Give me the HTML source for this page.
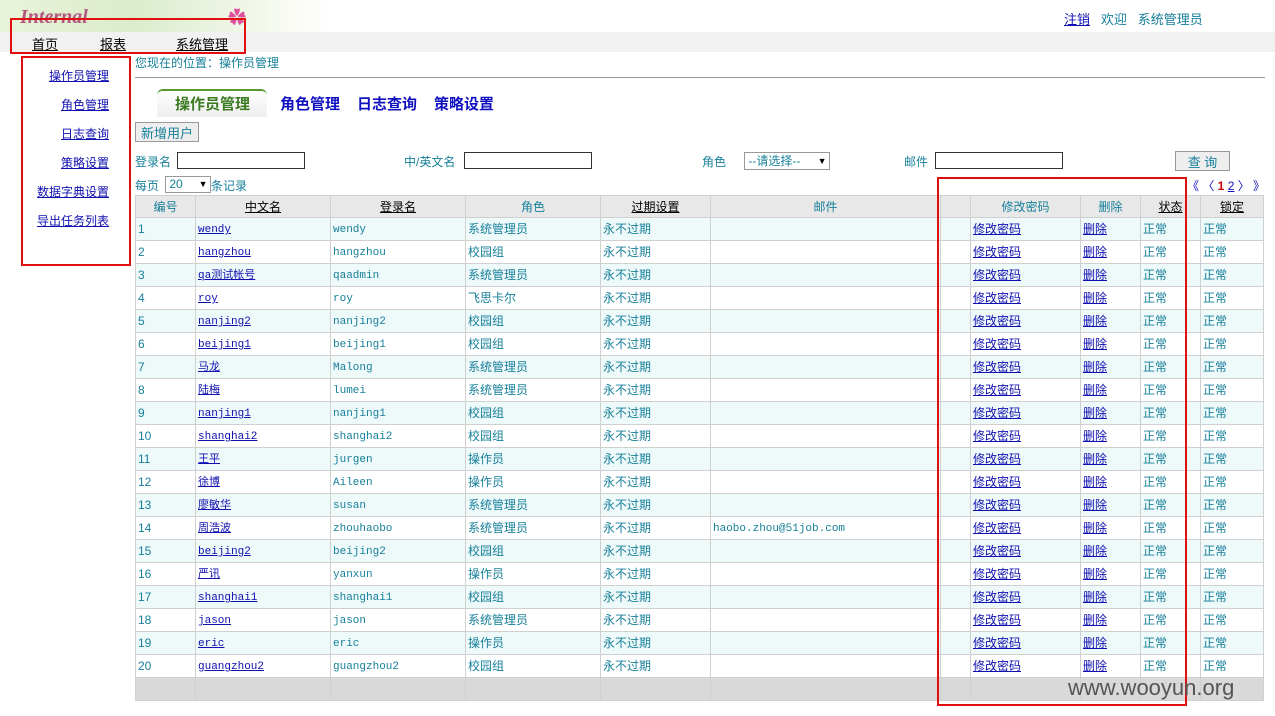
<!DOCTYPE html><html><head><meta charset="utf-8"><style>
body{margin:0;width:1275px;height:716px;background:#fff;font-family:"Liberation Sans","Noto Sans CJK SC",sans-serif;font-size:12px;color:#17809a;position:relative;overflow:hidden}
.a{position:absolute}
a{color:#1010b0;text-decoration:underline}
.nav a{color:#000}
table{border-collapse:collapse;table-layout:fixed;position:absolute;left:135px;top:195px}
td{border:1px solid #d0d0d0;height:22px;padding:0 2px;font-size:12px;white-space:nowrap;overflow:hidden;vertical-align:middle;line-height:14px}
tr.h td{background:#e8e8e8;text-align:center;height:21px}
tr.o td{background:#eef9fa}
tr.b td{background:#d9d9d9}
.m{font-family:"Liberation Mono","Noto Sans CJK SC",monospace;font-size:11px}
.m span,.m a{position:relative;top:1px}
input.t{position:absolute;height:15px;border:1px solid #333;padding:0}
.btn{position:absolute;background:#eee;border:1px solid #999;color:#17809a;font-size:13px;text-align:center}
.red{position:absolute;border:2px solid #e01010}
</style></head><body>
<div class="a" style="left:0;top:0;width:330px;height:32px;background:linear-gradient(90deg,#e9f3d8,#dbeccb 40%,#f4f8ec 80%,#fff)"></div>
<div class="a" style="left:20px;top:6px;font-family:'Liberation Serif',serif;font-style:italic;font-weight:bold;font-size:20px;color:#b05a80">Internal</div>
<div class="a" style="left:228px;top:4px;color:#e0509a;font-size:18px">✿</div>
<div class="a" style="left:0;top:32px;width:1275px;height:20px;background:#f1f1f1"></div>
<div class="a nav" style="left:32px;top:34px;font-size:13px"><a>首页</a></div>
<div class="a nav" style="left:100px;top:34px;font-size:13px"><a>报表</a></div>
<div class="a nav" style="left:176px;top:34px;font-size:13px"><a>系统管理</a></div>
<div class="a" style="left:1064px;top:9px;font-size:13px"><a>注销</a>&nbsp;&nbsp; <span>欢迎</span>&nbsp;&nbsp; <span>系统管理员</span></div>
<div class="red" style="left:10px;top:18px;width:232px;height:32px"></div>
<div class="red" style="left:21px;top:56px;width:106px;height:206px"></div>
<div class="a" style="left:49px;top:67px;font-size:12px"><a>操作员管理</a></div>
<div class="a" style="left:61px;top:96px"><a>角色管理</a></div>
<div class="a" style="left:61px;top:125px"><a>日志查询</a></div>
<div class="a" style="left:61px;top:154px"><a>策略设置</a></div>
<div class="a" style="left:37px;top:183px"><a>数据字典设置</a></div>
<div class="a" style="left:37px;top:212px"><a>导出任务列表</a></div>
<div class="a" style="left:135px;top:54px;font-size:12px">您现在的位置：操作员管理</div>
<div class="a" style="left:135px;top:77px;width:1130px;border-top:1px solid #999"></div>
<div class="a" style="left:157px;top:89px;width:110px;height:26px;background:linear-gradient(#fff,#eee);border-top:2px solid #5a9a30;border-radius:6px 6px 0 0"></div>
<div class="a" style="left:175px;top:93px;font-size:15px;font-weight:bold;color:#3a7a20">操作员管理</div>
<div class="a" style="left:280px;top:93px;font-size:15px;font-weight:bold;color:#1010c0">角色管理</div>
<div class="a" style="left:357px;top:93px;font-size:15px;font-weight:bold;color:#1010c0">日志查询</div>
<div class="a" style="left:434px;top:93px;font-size:15px;font-weight:bold;color:#1010c0">策略设置</div>
<div class="btn" style="left:135px;top:122px;width:62px;height:18px">新增用户</div>
<div class="a" style="left:135px;top:153px;font-size:12px">登录名</div><input class="t" style="left:177px;top:152px;width:126px">
<div class="a" style="left:404px;top:153px;font-size:12px">中/英文名</div><input class="t" style="left:464px;top:152px;width:126px">
<div class="a" style="left:702px;top:153px;font-size:12px">角色</div>
<div class="a" style="left:744px;top:152px;width:84px;height:16px;border:1px solid #999;font-size:12px;line-height:16px">&nbsp;--请选择-- <span style="float:right;color:#000;font-size:9px">▼&nbsp;</span></div>
<div class="a" style="left:904px;top:153px;font-size:12px">邮件</div><input class="t" style="left:935px;top:152px;width:126px">
<div class="btn" style="left:1175px;top:151px;width:53px;height:18px">查 询</div>
<div class="a" style="left:135px;top:177px;font-size:12px">每页</div>
<div class="a" style="left:165px;top:176px;width:44px;height:15px;border:1px solid #999;line-height:15px">&nbsp;20 <span style="float:right;color:#000;font-size:9px">▼&nbsp;</span></div>
<div class="a" style="left:211px;top:177px;font-size:12px">条记录</div>
<div class="a" style="left:1187px;top:177px;font-size:12px;color:#1010c0">《 〈 <b style="color:#c00">1</b> <u>2</u> 〉 》</div>
<table>
<colgroup><col style="width:60px"><col style="width:135px"><col style="width:135px"><col style="width:135px"><col style="width:110px"><col style="width:230px"><col style="width:30px"><col style="width:110px"><col style="width:60px"><col style="width:60px"><col style="width:63px"></colgroup>
<tr class="h"><td>编号</td><td><u style="color:#000">中文名</u></td><td><u style="color:#000">登录名</u></td><td>角色</td><td><u style="color:#000">过期设置</u></td><td>邮件</td><td></td><td>修改密码</td><td>删除</td><td><u style="color:#000">状态</u></td><td><u style="color:#000">锁定</u></td></tr>
<tr class="o"><td>1</td><td class="m"><a>wendy</a></td><td class="m"><span>wendy</span></td><td>系统管理员</td><td>永不过期</td><td></td><td></td><td><a>修改密码</a></td><td><a>删除</a></td><td>正常</td><td>正常</td></tr>
<tr><td>2</td><td class="m"><a>hangzhou</a></td><td class="m"><span>hangzhou</span></td><td>校园组</td><td>永不过期</td><td></td><td></td><td><a>修改密码</a></td><td><a>删除</a></td><td>正常</td><td>正常</td></tr>
<tr class="o"><td>3</td><td class="m"><a>qa测试帐号</a></td><td class="m"><span>qaadmin</span></td><td>系统管理员</td><td>永不过期</td><td></td><td></td><td><a>修改密码</a></td><td><a>删除</a></td><td>正常</td><td>正常</td></tr>
<tr><td>4</td><td class="m"><a>roy</a></td><td class="m"><span>roy</span></td><td>飞思卡尔</td><td>永不过期</td><td></td><td></td><td><a>修改密码</a></td><td><a>删除</a></td><td>正常</td><td>正常</td></tr>
<tr class="o"><td>5</td><td class="m"><a>nanjing2</a></td><td class="m"><span>nanjing2</span></td><td>校园组</td><td>永不过期</td><td></td><td></td><td><a>修改密码</a></td><td><a>删除</a></td><td>正常</td><td>正常</td></tr>
<tr><td>6</td><td class="m"><a>beijing1</a></td><td class="m"><span>beijing1</span></td><td>校园组</td><td>永不过期</td><td></td><td></td><td><a>修改密码</a></td><td><a>删除</a></td><td>正常</td><td>正常</td></tr>
<tr class="o"><td>7</td><td class="m"><a>马龙</a></td><td class="m"><span>Malong</span></td><td>系统管理员</td><td>永不过期</td><td></td><td></td><td><a>修改密码</a></td><td><a>删除</a></td><td>正常</td><td>正常</td></tr>
<tr><td>8</td><td class="m"><a>陆梅</a></td><td class="m"><span>lumei</span></td><td>系统管理员</td><td>永不过期</td><td></td><td></td><td><a>修改密码</a></td><td><a>删除</a></td><td>正常</td><td>正常</td></tr>
<tr class="o"><td>9</td><td class="m"><a>nanjing1</a></td><td class="m"><span>nanjing1</span></td><td>校园组</td><td>永不过期</td><td></td><td></td><td><a>修改密码</a></td><td><a>删除</a></td><td>正常</td><td>正常</td></tr>
<tr><td>10</td><td class="m"><a>shanghai2</a></td><td class="m"><span>shanghai2</span></td><td>校园组</td><td>永不过期</td><td></td><td></td><td><a>修改密码</a></td><td><a>删除</a></td><td>正常</td><td>正常</td></tr>
<tr class="o"><td>11</td><td class="m"><a>王平</a></td><td class="m"><span>jurgen</span></td><td>操作员</td><td>永不过期</td><td></td><td></td><td><a>修改密码</a></td><td><a>删除</a></td><td>正常</td><td>正常</td></tr>
<tr><td>12</td><td class="m"><a>徐博</a></td><td class="m"><span>Aileen</span></td><td>操作员</td><td>永不过期</td><td></td><td></td><td><a>修改密码</a></td><td><a>删除</a></td><td>正常</td><td>正常</td></tr>
<tr class="o"><td>13</td><td class="m"><a>廖敏华</a></td><td class="m"><span>susan</span></td><td>系统管理员</td><td>永不过期</td><td></td><td></td><td><a>修改密码</a></td><td><a>删除</a></td><td>正常</td><td>正常</td></tr>
<tr><td>14</td><td class="m"><a>周浩波</a></td><td class="m"><span>zhouhaobo</span></td><td>系统管理员</td><td>永不过期</td><td class="m"><span>haobo.zhou@51job.com</span></td><td></td><td><a>修改密码</a></td><td><a>删除</a></td><td>正常</td><td>正常</td></tr>
<tr class="o"><td>15</td><td class="m"><a>beijing2</a></td><td class="m"><span>beijing2</span></td><td>校园组</td><td>永不过期</td><td></td><td></td><td><a>修改密码</a></td><td><a>删除</a></td><td>正常</td><td>正常</td></tr>
<tr><td>16</td><td class="m"><a>严讯</a></td><td class="m"><span>yanxun</span></td><td>操作员</td><td>永不过期</td><td></td><td></td><td><a>修改密码</a></td><td><a>删除</a></td><td>正常</td><td>正常</td></tr>
<tr class="o"><td>17</td><td class="m"><a>shanghai1</a></td><td class="m"><span>shanghai1</span></td><td>校园组</td><td>永不过期</td><td></td><td></td><td><a>修改密码</a></td><td><a>删除</a></td><td>正常</td><td>正常</td></tr>
<tr><td>18</td><td class="m"><a>jason</a></td><td class="m"><span>jason</span></td><td>系统管理员</td><td>永不过期</td><td></td><td></td><td><a>修改密码</a></td><td><a>删除</a></td><td>正常</td><td>正常</td></tr>
<tr class="o"><td>19</td><td class="m"><a>eric</a></td><td class="m"><span>eric</span></td><td>操作员</td><td>永不过期</td><td></td><td></td><td><a>修改密码</a></td><td><a>删除</a></td><td>正常</td><td>正常</td></tr>
<tr><td>20</td><td class="m"><a>guangzhou2</a></td><td class="m"><span>guangzhou2</span></td><td>校园组</td><td>永不过期</td><td></td><td></td><td><a>修改密码</a></td><td><a>删除</a></td><td>正常</td><td>正常</td></tr>
<tr class="b"><td></td><td></td><td></td><td></td><td></td><td></td><td></td><td></td><td></td><td></td><td></td></tr>
</table>
<div class="red" style="left:937px;top:177px;width:246px;height:525px"></div>
<div class="a" style="left:1068px;top:675px;font-size:22px;color:#555">www.wooyun.org</div>
</body></html>
